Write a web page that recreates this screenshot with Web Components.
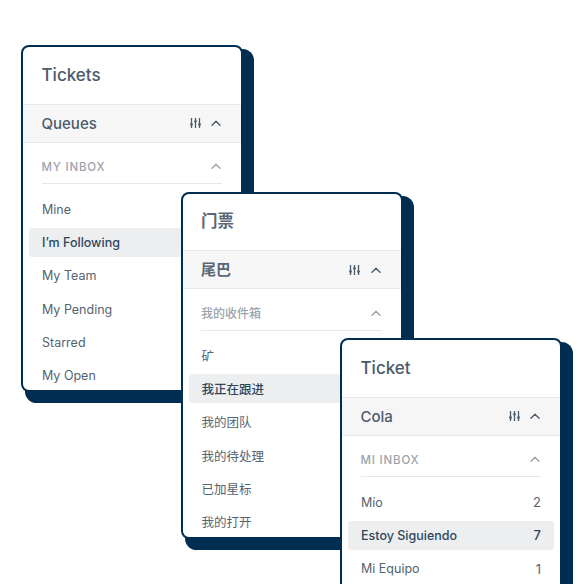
<!DOCTYPE html>
<html lang="en"><head><meta charset="utf-8"><title>Tickets</title>
<style>
html,body{margin:0;padding:0;background:#fff}
body{width:584px;height:584px;overflow:hidden;position:relative;font-family:Inter,"Noto Sans CJK SC",sans-serif;color:#4b5b6c}
</style></head><body>
<ticket-card style="left:21px;top:45px" heading="Tickets" queue="Queues" section="MY INBOX" spaced>
  <ticket-row>Mine</ticket-row>
  <ticket-row active>I’m Following</ticket-row>
  <ticket-row>My Team</ticket-row>
  <ticket-row>My Pending</ticket-row>
  <ticket-row>Starred</ticket-row>
  <ticket-row>My Open</ticket-row>
</ticket-card>
<ticket-card style="left:180.5px;top:191.5px" heading="门票" queue="尾巴" section="我的收件箱" lang="zh">
  <ticket-row>矿</ticket-row>
  <ticket-row active>我正在跟进</ticket-row>
  <ticket-row>我的团队</ticket-row>
  <ticket-row>我的待处理</ticket-row>
  <ticket-row>已加星标</ticket-row>
  <ticket-row>我的打开</ticket-row>
</ticket-card>
<ticket-card style="left:340px;top:338px" heading="Ticket" queue="Cola" section="MI INBOX" spaced lang="es">
  <ticket-row count="2">Mío</ticket-row>
  <ticket-row active count="7">Estoy Siguiendo</ticket-row>
  <ticket-row count="1">Mi Equipo</ticket-row>
</ticket-card>
<script>
const chevron=c=>`<svg width="10" height="6" viewBox="0 0 10 6" fill="none" stroke="${c}" stroke-width="1.4" stroke-linecap="round" stroke-linejoin="round"><path d="M1 5.2 5 1.2l4 4"/></svg>`;
const sliders=`<svg width="11" height="10" viewBox="0 0 11 10" fill="#4b5b6c" stroke="#4b5b6c" stroke-width="1.3"><path fill="none" d="M1.500 0v10M5.500 0v10M9.500 0v10"/><path stroke="none" d="M.2 5.600h2.600v1.800H.2zM4.200 2.400h2.600v1.800H4.200zM8.200 5.600h2.600v1.800H8.200z"/></svg>`;
class TicketCard extends HTMLElement{
  constructor(){super();this.attachShadow({mode:"open"});}
  connectedCallback(){
    const g=n=>this.getAttribute(n)||"";
    this.shadowRoot.innerHTML=`<style>
:host{display:flex;flex-direction:column;position:absolute;box-sizing:border-box;width:222px;height:347px;background:#fff;border:2px solid #002d52;border-radius:8px;box-shadow:7.5px 7.5px 0 3.5px #002d52}
.wrap{display:flex;flex-direction:column;overflow:hidden;border-radius:6px;height:100%}
.title{flex:none;box-sizing:border-box;height:56.500px;display:flex;align-items:center;padding-left:18.500px;font-size:17px;font-weight:550;color:#4b5b6c}
:host([lang="zh"]) .title{font-size:16.500px;padding-bottom:3px;font-weight:700;color:#5a6875}
.queue{flex:none;box-sizing:border-box;height:39px;display:flex;align-items:center;justify-content:space-between;padding:0 20px 0 18.500px;background:#f6f6f7;border-top:1.500px solid #e6e8ec;border-bottom:1.500px solid #e6e8ec;font-size:15px;font-weight:550;color:#4b5b6c}
:host([lang="zh"]) .queue span{padding-bottom:2px;font-weight:700;color:#5a6875}
.tools{display:flex;align-items:center;gap:10.500px}
.section{flex:none;box-sizing:border-box;height:41.500px;margin:0 19px 0 18.500px;display:flex;align-items:center;justify-content:space-between;border-bottom:1.500px solid #e6e8ec;padding:7px 1px 0 0;font-size:11.500px;font-weight:500;color:#9ba3ad}
:host([spaced]) .section span{letter-spacing:.8px;padding-top:2px}
:host([lang="zh"]) .section{font-size:12px}
.rows{display:flex;flex-direction:column;gap:4px;padding:10.500px 6px 0}
:host([lang="zh"]) .rows{padding-top:10px}
svg{display:block}
</style><div class="wrap">
<div class="title">${g("heading")}</div>
<div class="queue"><span>${g("queue")}</span><div class="tools">${sliders}${chevron("#4b5b6c")}</div></div>
<div class="section"><span>${g("section")}</span>${chevron("#9ba3ad")}</div>
<div class="rows"><slot></slot></div></div>`;
  }
}
class TicketRow extends HTMLElement{
  constructor(){super();this.attachShadow({mode:"open"});}
  connectedCallback(){
    const c=this.getAttribute("count");
    this.shadowRoot.innerHTML=`<style>
:host{display:flex;align-items:center;justify-content:space-between;box-sizing:border-box;height:29.330px;padding:0 13px;border-radius:3px;font-size:12.500px;color:#55636f}
:host([active]){background:#eceef0;color:#2f465c;font-weight:500}
.n{font-size:13px}
</style><span><slot></slot></span>${c?`<span class="n">${c}</span>`:""}`;
  }
}
customElements.define("ticket-card",TicketCard);
customElements.define("ticket-row",TicketRow);
</script>
</body></html>
